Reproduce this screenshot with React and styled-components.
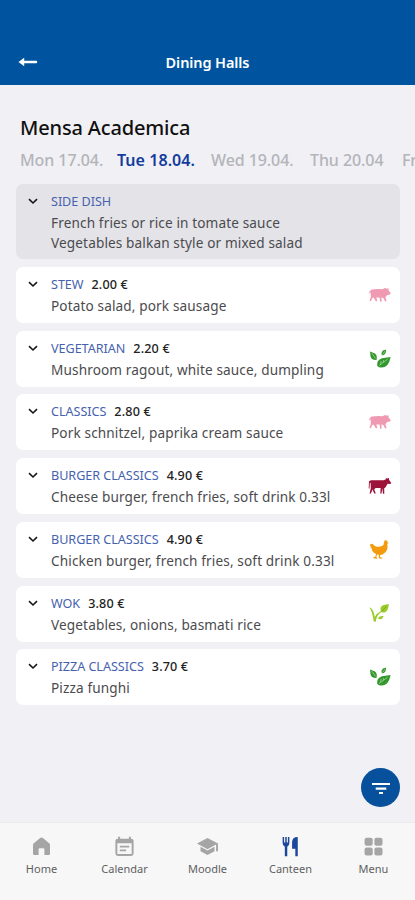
import styled, { createGlobalStyle } from "styled-components";

const days = [
  { name: "Mon 17.04.", width: 97 },
  { name: "Tue 18.04.", width: 94, active: true },
  { name: "Wed 19.04.", width: 99 },
  { name: "Thu 20.04", width: 92 },
  { name: "Fr", width: 16 },
];

const meals = [
  {
    category: "SIDE DISH",
    lines: [
      "French fries or rice in tomate sauce",
      "Vegetables balkan style or mixed salad",
    ],
    side: true,
  },
  { category: "STEW", price: "2.00 €", lines: ["Potato salad, pork sausage"], icon: "pig" },
  {
    category: "VEGETARIAN",
    price: "2.20 €",
    lines: ["Mushroom ragout, white sauce, dumpling"],
    icon: "leaves",
  },
  {
    category: "CLASSICS",
    price: "2.80 €",
    lines: ["Pork schnitzel, paprika cream sauce"],
    icon: "pig",
  },
  {
    category: "BURGER CLASSICS",
    price: "4.90 €",
    lines: ["Cheese burger, french fries, soft drink 0.33l"],
    icon: "cow",
  },
  {
    category: "BURGER CLASSICS",
    price: "4.90 €",
    lines: ["Chicken burger, french fries, soft drink 0.33l"],
    icon: "chicken",
  },
  {
    category: "WOK",
    price: "3.80 €",
    lines: ["Vegetables, onions, basmati rice"],
    icon: "sprout",
  },
  { category: "PIZZA CLASSICS", price: "3.70 €", lines: ["Pizza funghi"], icon: "leaves" },
];

const tabs = [
  { name: "Home", icon: "home" },
  { name: "Calendar", icon: "calendar" },
  { name: "Moodle", icon: "moodle" },
  { name: "Canteen", icon: "canteen", active: true },
  { name: "Menu", icon: "menu" },
];

function MealIcon({ type }) {
  switch (type) {
    case "pig":
      return (
        <FoodSvg viewBox="0 0 24 24" fill="#f099b3">
          <path d="M3 5.8 Q8 4.8 14.5 5.2 L17 3.9 L19 4.8 L20.4 4 L20.6 6.4 L22.8 9.2 L22 10.5 L19.2 10.9 L17.4 13.2 L18.6 17 L17.2 17.6 L15.3 13.9 L13.4 13.6 L13.7 17.4 L12.2 17.7 L11.5 13.6 L8.3 13.4 L9.3 16.8 L8 17.5 L5.6 13.4 L4.4 14 L2.8 17.3 L1.5 16.7 L2.9 12.9 L2.5 7.7 L1.5 9.4 L.8 8.8 Z" />
        </FoodSvg>
      );
    case "cow":
      return (
        <FoodSvg viewBox="0 0 24 24" fill="#9c1239">
          <path d="M1 6.2 L3 5.2 L15.8 5.3 L18.3 4 L17.6 2.8 L19.2 3.6 L21 3 L21 4.8 L23.3 8 L22.3 9.1 L19.6 8.8 L17.4 12.4 L16.2 13.2 L16.3 18.7 L15 18.7 L14.3 13.2 L13.5 18.5 L12.3 18.5 L12.6 13.1 L7.8 12.9 L6.2 14.2 L7.8 18.6 L6.3 18.6 L4.5 14.4 L2.9 18.4 L1.6 18.4 L2.8 13 L2.6 8 L1.9 7.5 L1.5 13.5 L.7 13.5 Z" />
        </FoodSvg>
      );
    case "chicken":
      return (
        <FoodSvg viewBox="0 0 24 24" fill="#f39b0c">
          <path d="M2.4 5.2 L4.4 4.7 L7.2 7.3 Q11 8.4 14 7.1 Q16 6.2 16 3.2 L17 .8 L18.2 1.8 L19.4 1.2 L19.3 3 L20.5 4 L19.3 4.8 Q20.3 10.3 17.5 13.3 L14.5 15.6 L12.2 15.9 L12 17.9 L14.4 19 L13.9 19.7 L10.8 19.3 L10.8 15.7 L9.1 15.4 L8.3 18.1 L9.4 19.3 L8.7 19.8 L5.3 19.3 L5.3 18.4 L7.3 17.8 L8 14.9 Q3.6 12.8 3.6 8.9 L2.2 8.2 L3 7.2 L1.8 6.4 Z" />
        </FoodSvg>
      );
    case "sprout":
      return (
        <FoodSvg viewBox="0 0 24 24" fill="#9acb28">
          <path d="M1.3 4.3 Q5.5 5.3 6.8 14 Q9 10 12.8 8.3 Q11.1 3 16.8 1.8 L20.8 1 Q20.3 7.5 17.4 9 Q15.4 10.1 13.4 9 Q8.4 12.1 7.8 18.8 L5.7 18.5 Q4.4 8.6 1.3 4.3 Z" />
          <path d="M10 15.8 Q11 12.5 15.5 13 Q14.3 17.5 10 15.8Z" />
          <path d="M13.7 8.3 L18.5 3.3" stroke="#70a925" strokeWidth=".8" />
        </FoodSvg>
      );
    default:
      return (
        <FoodSvg viewBox="0 0 24 24" fill="#32972c">
          <path d="M2 3.4 L7 5.6 Q9.6 7.8 8.5 12 Q3 12.2 2.5 8 Z" />
          <path d="M13.6 4.4 Q14.6 1.3 18 1.7 Q18.4 6.3 14.3 7.5 Q13 6.3 13.6 4.4 Z" />
          <path d="M9.2 17.7 Q8.4 12.2 14 10.3 L22.6 9 L21.4 13.2 Q19.4 19 14 19.5 Q10.7 19.8 9.2 17.7 Z" />
          <path
            d="M3.8 5.2 L7.5 10.4 M14.5 6.5 L17 3.2 M11 17.6 L19.7 11.2 M13.2 13 L12.7 16 M15.6 12.1 L15.4 14.3"
            fill="none"
            stroke="#b4dea6"
            strokeWidth=".7"
          />
        </FoodSvg>
      );
  }
}

function TabIcon({ type }) {
  switch (type) {
    case "home":
      return <path d="M12 1.8 Q12.9 1.8 13.9 2.7 L20.8 8.2 Q21.7 9 21.7 10.2 V20.3 Q21.7 21.8 20.2 21.8 H15.3 V15 Q15.3 13.9 14.2 13.9 H9.8 Q8.7 13.9 8.7 15 V21.8 H3.8 Q2.3 21.8 2.3 20.3 V10.2 Q2.3 9 3.2 8.2 L10.1 2.7 Q11.1 1.8 12 1.8Z" />;
    case "calendar":
      return (
        <>
          <path
            fillRule="evenodd"
            d="M4.7 .8 H7 V3 H17 V.8 H19.3 V3 Q22.4 3 22.4 5.8 V20 Q22.4 22.8 19.6 22.8 H4.4 Q1.6 22.8 1.6 20 V5.8 Q1.6 3 4.7 3Z M3.8 8.4 V20.6 H20.2 V8.4Z"
          />
          <path d="M6.6 11 H17.4 V13 H6.6Z M6.6 15.4 H13.8 V17.4 H6.6Z" />
        </>
      );
    case "moodle":
      return (
        <>
          <path d="M12 2.2 L24 8.6 V17.3 H21.8 V9.8 L12 15 L0 8.6Z" />
          <path d="M4 12.3 L12 16.6 L20 12.3 V17.3 L12 21.8 L4 17.3Z" />
        </>
      );
    case "canteen":
      return (
        <>
          <path d="M3 1 H4.7 V7.3 H6 V1 H7.7 V7.3 H9 V1 H10.7 V8 Q10.7 11.2 8.3 12.2 V23 H5.5 V12.2 Q3 11.2 3 8Z" />
          <path d="M20.3 1 V23 H17.5 V14.5 H13.8 V7 Q13.8 1 20.3 1Z" />
        </>
      );
    default:
      return (
        <>
          <rect x="1.8" y="2" width="9.3" height="9.2" rx="2.4" />
          <rect x="13" y="2" width="9.3" height="9.2" rx="2.4" />
          <rect x="1.8" y="13.1" width="9.3" height="9.2" rx="2.4" />
          <rect x="13" y="13.1" width="9.3" height="9.2" rx="2.4" />
        </>
      );
  }
}

function App() {
  return (
    <Screen>
      <GlobalStyle />
      <Header>
        <BackButton aria-label="Back">
          <svg width="20" height="12" viewBox="0 0 20 12" fill="white">
            <path d="M.5 6 L6.2 1.8 V4.8 H18.2 Q19.2 4.8 19.2 6 Q19.2 7.2 18.2 7.2 H6.2 V10.2 Z" />
          </svg>
        </BackButton>
        <HeaderTitle>Dining Halls</HeaderTitle>
      </Header>
      <Content>
        <HallName>Mensa Academica</HallName>
        <Days>
          {days.map((day) => (
            <Day key={day.name} $active={day.active} $width={day.width}>
              {day.name}
            </Day>
          ))}
        </Days>
        <MealList>
          {meals.map((meal, index) => (
            <MealCard key={index} $side={meal.side}>
              <Chevron viewBox="0 0 10 7">
                <path d="M1 1.2 L5 5 L9 1.2" fill="none" stroke="#161616" strokeWidth="1.6" />
              </Chevron>
              <MealInfo>
                <MealHead>
                  <Category>{meal.category}</Category>
                  {meal.price && <Price>{meal.price}</Price>}
                </MealHead>
                {meal.lines.map((line) => (
                  <MealLine key={line}>{line}</MealLine>
                ))}
              </MealInfo>
              {meal.icon && <MealIcon type={meal.icon} />}
            </MealCard>
          ))}
        </MealList>
        <FilterButton aria-label="Filter">
          <svg width="20" height="16" viewBox="0 0 20 16" fill="none">
            <path d="M1 4 H19 M4.7 8.6 H15.3 M8 13 H12" stroke="white" strokeWidth="2.1" />
          </svg>
        </FilterButton>
      </Content>
      <TabBar>
        {tabs.map((tab) => (
          <Tab key={tab.name}>
            <TabSvg viewBox="0 0 24 24" $active={tab.active}>
              <TabIcon type={tab.icon} />
            </TabSvg>
            <TabLabel>{tab.name}</TabLabel>
          </Tab>
        ))}
      </TabBar>
    </Screen>
  );
}

const GlobalStyle = createGlobalStyle`
  * {
    box-sizing: border-box;
  }
  body {
    margin: 0;
    font-family: "Noto Sans", "Open Sans", sans-serif;
  }
  button {
    border: 0;
    padding: 0;
    font: inherit;
  }
`;

const Screen = styled.div`
  width: 100%;
  height: 100vh;
  display: flex;
  flex-direction: column;
  overflow: hidden;
  background-color: #f0f0f5;
`;

const Header = styled.header`
  height: 85px;
  flex-shrink: 0;
  display: grid;
  grid-template-columns: 50px 1fr 50px;
  align-items: center;
  padding-top: 39px;
  background-color: #00549f;
`;

const BackButton = styled.button`
  display: flex;
  padding-left: 18px;
  background: none;
`;

const HeaderTitle = styled.div`
  text-align: center;
  color: white;
  font-size: 14.5px;
  font-weight: 600;
  letter-spacing: -0.1px;
`;

const Content = styled.main`
  flex: 1;
  min-height: 0;
  display: flex;
  flex-direction: column;
  padding: 28px 15px 15px 16px;
`;

const HallName = styled.h1`
  margin: 0 0 0 4px;
  font-size: 20px;
  font-weight: 500;
  line-height: 30px;
  letter-spacing: -0.15px;
  color: #101010;
`;

const Days = styled.div`
  display: flex;
  height: 34.4px;
  padding-top: 5.4px;
  margin: 0 -15px 7px 4px;
  overflow: hidden;
`;

const Day = styled.div`
  flex: 0 0 ${(props) => props.$width}px;
  font-size: 16px;
  line-height: 24px;
  letter-spacing: ${(props) => (props.$active ? 0.05 : -0.08)}px;
  white-space: nowrap;
  font-weight: ${(props) => (props.$active ? 600 : 500)};
  color: ${(props) => (props.$active ? "#143c9c" : "#b4b4b9")};
`;

const MealList = styled.div`
  display: flex;
  flex-direction: column;
  gap: 7.7px;
`;

const MealCard = styled.article`
  height: ${(props) => (props.$side ? 75 : 56)}px;
  display: flex;
  align-items: flex-start;
  padding: 7px 8px 0 12px;
  border-radius: 7px;
  background-color: ${(props) => (props.$side ? "#e3e3e8" : "white")};
`;

const Chevron = styled.svg`
  width: 10px;
  height: 7px;
  flex-shrink: 0;
  margin: 7px 13px 0 0;
`;

const MealInfo = styled.div`
  flex: 1;
  min-width: 0;
  white-space: nowrap;
`;

const MealHead = styled.div`
  display: flex;
  gap: 8px;
  height: 22px;
  line-height: 21px;
  font-size: 12.6px;
`;

const Category = styled.span`
  color: #4662ae;
  letter-spacing: -0.03px;
`;

const Price = styled.span`
  color: #222;
  font-weight: 500;
  letter-spacing: 0.15px;
`;

const MealLine = styled.div`
  font-size: 13.6px;
  line-height: 19.3px;
  letter-spacing: 0.13px;
  color: #4b4b4e;
`;

const FoodSvg = styled.svg`
  width: 24px;
  height: 24px;
  flex-shrink: 0;
  margin-top: 10px;
`;

const FilterButton = styled.button`
  width: 39px;
  height: 39px;
  flex-shrink: 0;
  margin-top: auto;
  align-self: flex-end;
  display: flex;
  align-items: center;
  justify-content: center;
  border-radius: 50%;
  background-color: #07509b;
`;

const TabBar = styled.nav`
  height: 78px;
  flex-shrink: 0;
  display: grid;
  grid-template-columns: repeat(5, 1fr);
  border-top: 1px solid #ebebed;
  background-color: #f7f7f7;
`;

const Tab = styled.div`
  display: flex;
  flex-direction: column;
  align-items: center;
  padding-top: 13px;
`;

const TabSvg = styled.svg`
  width: 21px;
  height: 21px;
  fill: ${(props) => (props.$active ? "#1d479d" : "#a5a5a5")};
`;

const TabLabel = styled.div`
  margin-top: 4px;
  font-size: 11px;
  line-height: 16px;
  color: #5f5f5f;
`;

export default App;
